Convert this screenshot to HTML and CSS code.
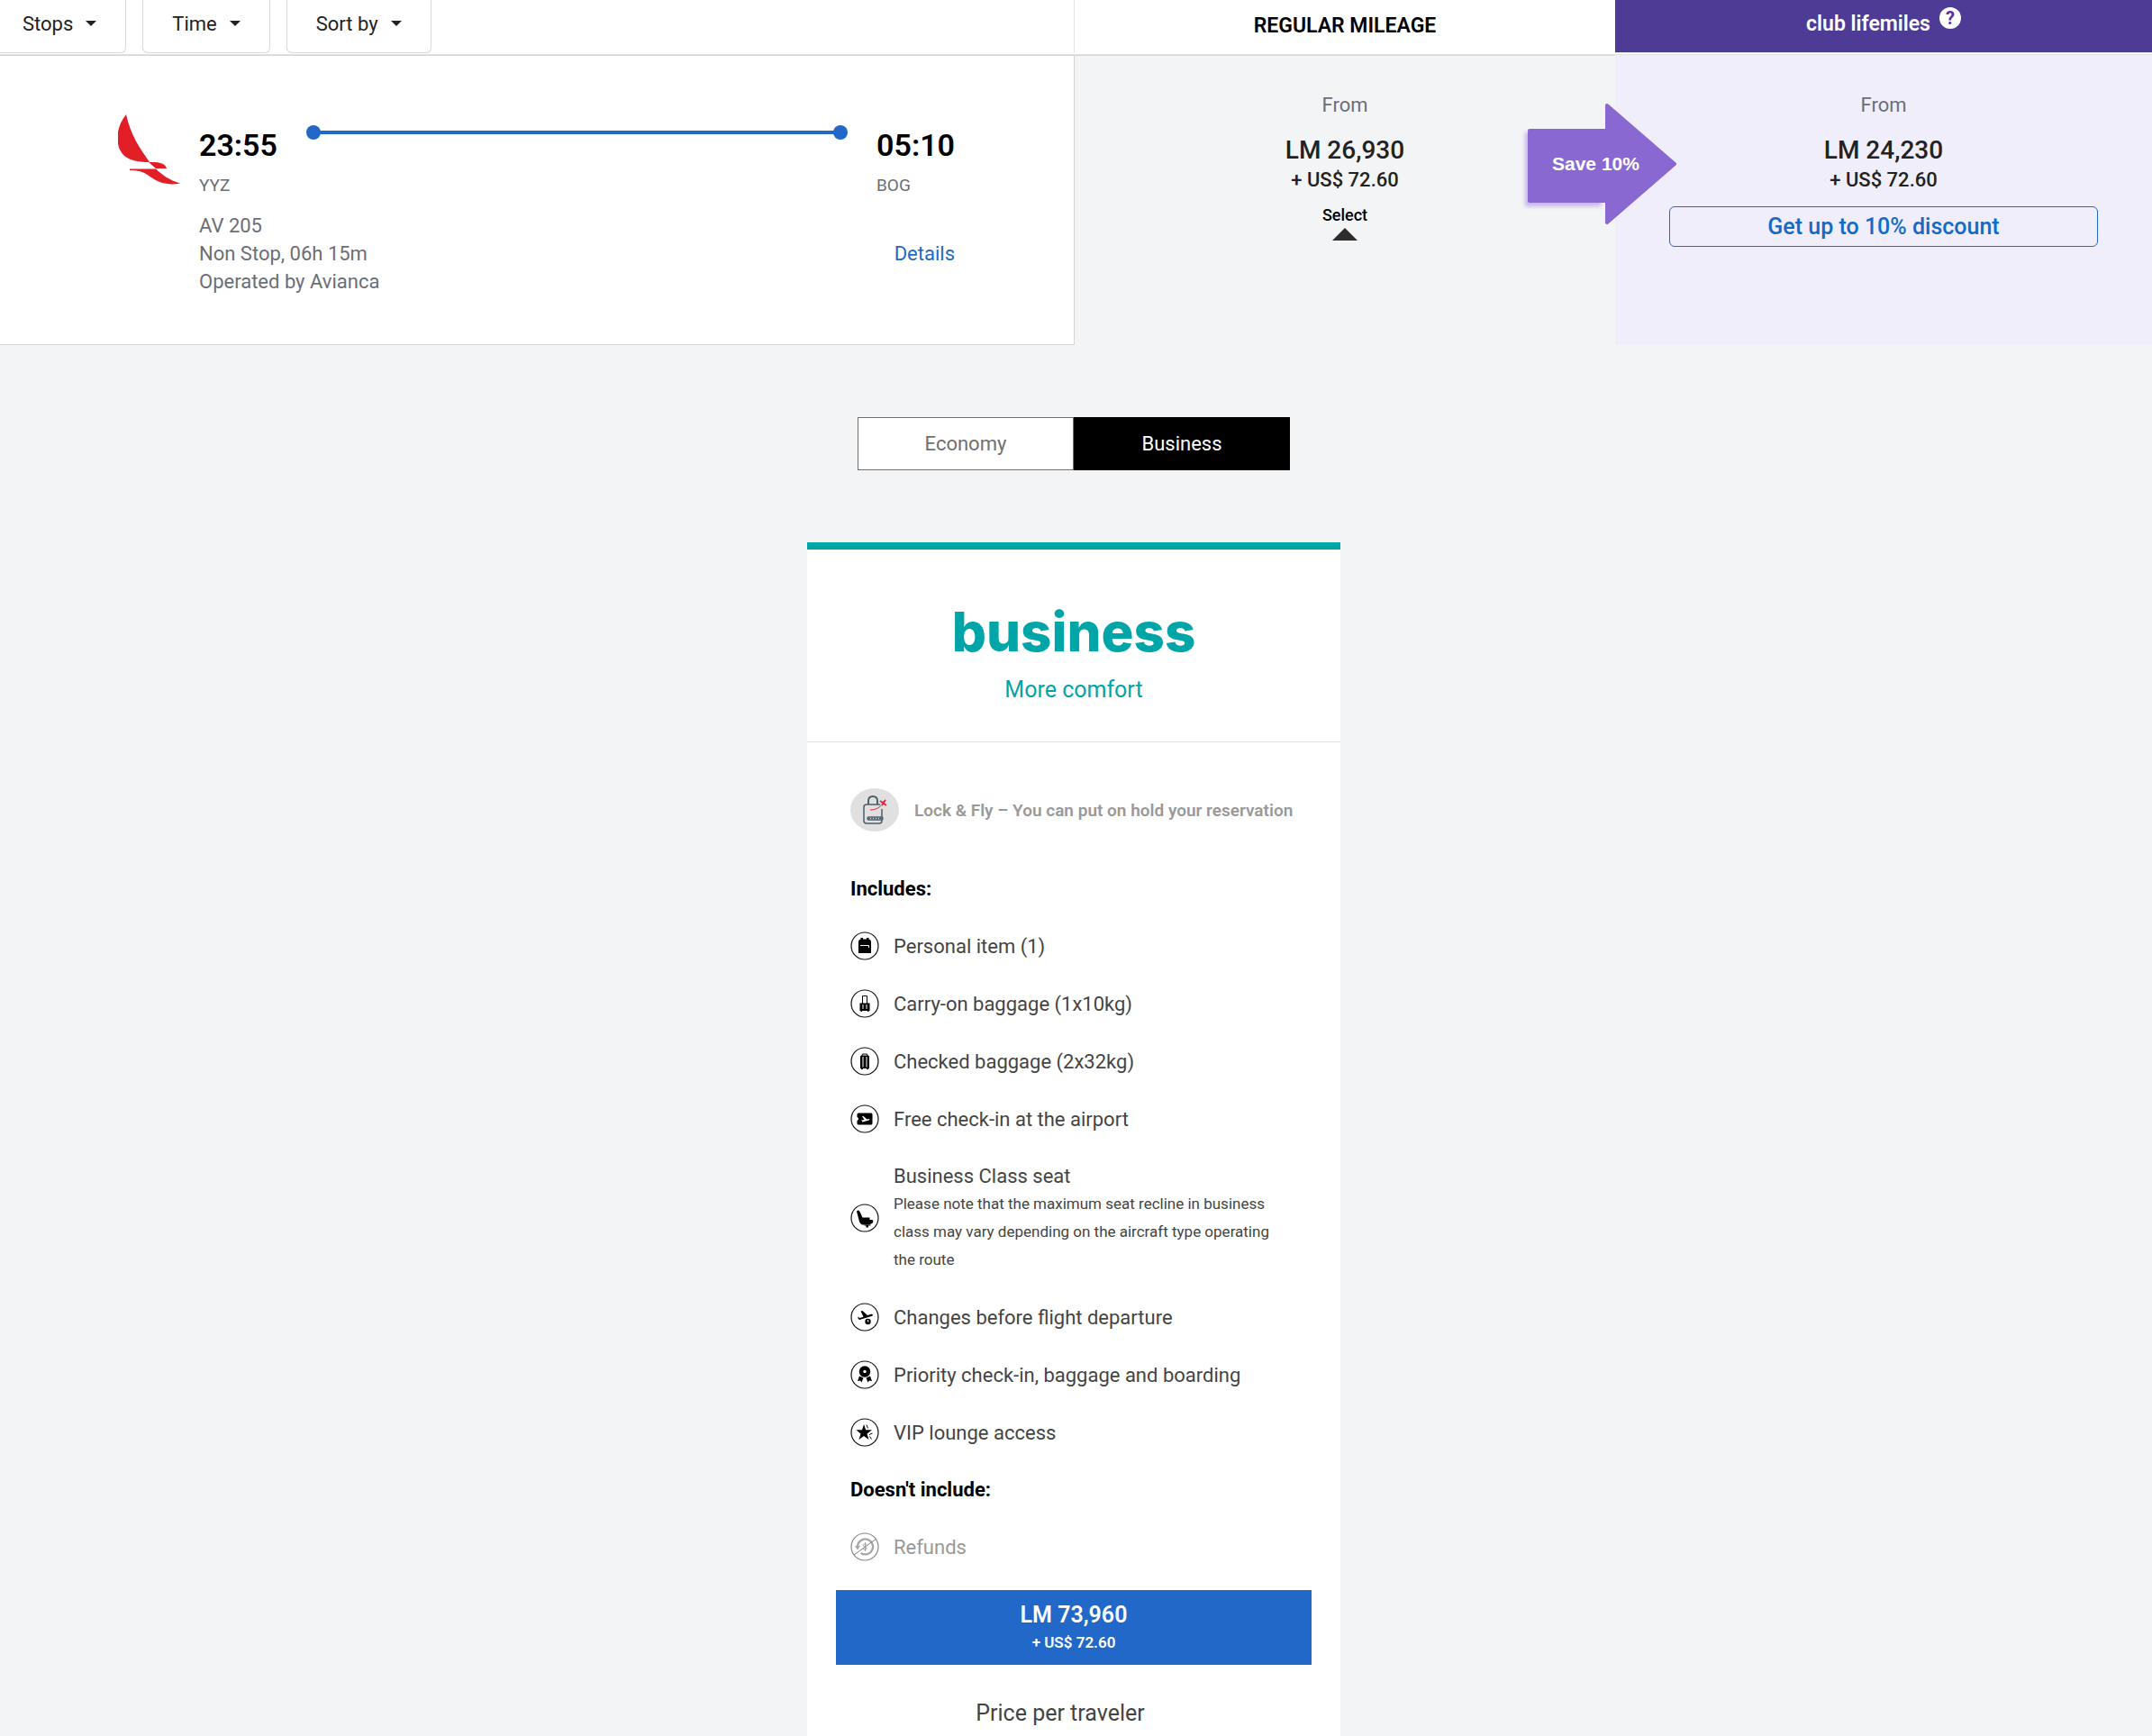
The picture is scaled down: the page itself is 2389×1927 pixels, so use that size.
FILE: index.html
```html
<!DOCTYPE html>
<html lang="en">
<head>
    <meta charset="UTF-8">
    <meta name="viewport" content="width=device-width, initial-scale=1.0">
    <title>Flights</title>
    <link rel="stylesheet" href="styles.css">
</head>
<body>
    <header class="columns top-bar">
        <div class="filters">
            <button type="button" class="filter">Stops <span class="caret"></span></button>
            <button type="button" class="filter">Time <span class="caret"></span></button>
            <button type="button" class="filter">Sort by <span class="caret"></span></button>
        </div>
        <h2 class="regular-title">REGULAR MILEAGE</h2>
        <div class="club-title">
            <h2>club lifemiles</h2>
            <button type="button" class="help" aria-label="Help">?</button>
        </div>
    </header>

    <section class="columns flight">
        <div class="flight-info">
            <svg class="airline" viewBox="0 0 69 78">
                <path fill="#e21f26" d="M9 0C-4 16-3 37 7 46c8 6 17 7 28 7C24 37 14 23 9 0z"/>
                <path fill="#e21f26" d="M34 53c10 0 18 0 20 7H42z"/>
                <path fill="#e21f26" d="M13 60.500h29C49 67 57 73 69 76.500 57 79 45 76 37 70c-8-6-13-8-24-8z"/>
            </svg>
            <div class="flight-main">
                <div class="route">
                    <div class="stop">
                        <strong class="time">23:55</strong>
                        <span class="code">YYZ</span>
                    </div>
                    <div class="track"></div>
                    <div class="stop">
                        <strong class="time">05:10</strong>
                        <span class="code">BOG</span>
                    </div>
                </div>
                <div class="flight-details">
                    <p>AV 205<br>Non Stop, 06h 15m<br>Operated by Avianca</p>
                    <a href="#">Details</a>
                </div>
            </div>
        </div>
        <div class="fare regular">
            <p class="from">From</p>
            <p class="miles">LM 26,930</p>
            <p class="taxes">+ US$ 72.60</p>
            <button type="button" class="select">Select<span class="triangle"></span></button>
        </div>
        <div class="fare club">
            <div class="save">
                <svg viewBox="0 0 176 146">
                    <path class="save-shadow" d="M7 34h84v82H7z"/>
                    <path fill="#8968d1" stroke="#8968d1" stroke-width="4" stroke-linejoin="round" d="M12 32h86V4l75 65-75 65V110H12z"/>
                </svg>
                <span>Save 10%</span>
            </div>
            <p class="from">From</p>
            <p class="miles">LM 24,230</p>
            <p class="taxes">+ US$ 72.60</p>
            <button type="button" class="discount">Get up to 10% discount</button>
        </div>
    </section>

    <main class="cabins">
        <div class="cabin-tabs">
            <button type="button">Economy</button>
            <button type="button" class="active">Business</button>
        </div>

        <article class="card">
            <div class="card-head">
                <h1>business</h1>
                <p>More comfort</p>
            </div>
            <div class="card-body">
                <div class="lock">
                    <svg viewBox="0 0 54 48">
                        <ellipse cx="27" cy="24" rx="27" ry="24" fill="#e0e0e0"/>
                        <g fill="none" stroke="#4c5f6b" stroke-width="1.500">
                            <path d="M33 18H18q-3 0-3 3v15q0 3 3 3h14q3 0 3-3V23"/>
                            <path stroke-width="2" d="M20 18v-4q0-5 5-5t5 5v4"/>
                            <rect x="19" y="32" width="17" height="3" rx="1.500"/>
                            <path stroke-dasharray="2 1" d="M20 33.500h15"/>
                        </g>
                        <path fill="none" stroke="#e8203c" stroke-width="1" d="M22 24c7 0 11-3 15-8"/>
                        <path fill="none" stroke="#e8203c" stroke-width="1.600" d="M33 14l7 5M39 13l-4 6M36 16l3-3"/>
                    </svg>
                    <span>Lock &amp; Fly – You can put on hold your reservation</span>
                </div>
                <h3>Includes:</h3>
                <ul class="perks">
                    <li>
                        <svg viewBox="0 0 32 32">
                            <circle class="ring" cx="16" cy="16" r="15"/>
                            <path d="M11.500 7h2.500v1.500h4V7h2.500v1.500q2.500.5 2.500 3V24H9V11.500q0-2.500 2.500-3z"/>
                            <path class="cut" d="M11 15.500h9.500v2.500"/>
                        </svg>
                        Personal item (1)
                    </li>
                    <li>
                        <svg viewBox="0 0 32 32">
                            <circle class="ring" cx="16" cy="16" r="15"/>
                            <path class="line" d="M13.500 16V7.500h5V16"/>
                            <path d="M10.500 15.500h11v8.500h-1v1h-1.500v-1h-6v1h-1.500v-1h-1z"/>
                            <path class="cut" d="M14 17v5M18 17v5"/>
                        </svg>
                        Carry-on baggage (1x10kg)
                    </li>
                    <li>
                        <svg viewBox="0 0 32 32">
                            <circle class="ring" cx="16" cy="16" r="15"/>
                            <path class="line" d="M12.500 11l1-3h5l1 3"/>
                            <path d="M11 11q0-1.500 1.500-1.500h7q1.500 0 1.500 1.500v13h-1v1h-2v-1h-4v1h-2v-1h-1z"/>
                            <path class="cut" d="M14 11v11.500M18 11v11.500"/>
                        </svg>
                        Checked baggage (2x32kg)
                    </li>
                    <li>
                        <svg viewBox="0 0 32 32">
                            <circle class="ring" cx="16" cy="16" r="15"/>
                            <path d="M9 9.500h14q1.500 0 1.500 1.500v10q0 1.500-1.500 1.500H9q-1.500 0-1.500-1.500v-3c2-.7 2-3.300 0-4V11q0-1.500 1.500-1.500z"/>
                            <path fill="#fff" d="M12 16.500l1.500 1 2-.5-2.500-4h1.500l4 3.500 2.500-.5q1 1-.5 1.500l-7 2z"/>
                        </svg>
                        Free check-in at the airport
                    </li>
                    <li>
                        <svg viewBox="0 0 32 32">
                            <circle class="ring" cx="16" cy="16" r="15"/>
                            <path d="M7 8.500q2-2 3.500.5l3 6.500h8v2.500h3q2 2-.5 4l-3 1.500h-8q-2-.5-3-3.500z"/>
                            <path d="M15.500 23.500h7v1h-2.500v2h-2.500v-2h-2z"/>
                        </svg>
                        <div>
                            Business Class seat
                            <small>Please note that the maximum seat recline in business class may vary depending on the aircraft type operating the route</small>
                        </div>
                    </li>
                    <li>
                        <svg viewBox="0 0 32 32">
                            <circle class="ring" cx="16" cy="16" r="15"/>
                            <path d="M8 15.500l2.500 1.500 4-1.200-3-6.300 2-.5 5.500 5 4-1.200q2-.3 2 1-.3 1-1.500 1.300L10 19q-1.500-1-2-3.500z"/>
                            <circle cx="19.500" cy="21" r="3.200"/>
                            <path class="cut" d="M19.500 19v2h1"/>
                        </svg>
                        Changes before flight departure
                    </li>
                    <li>
                        <svg viewBox="0 0 32 32">
                            <circle class="ring" cx="16" cy="16" r="15"/>
                            <circle cx="16" cy="12.500" r="6.200"/>
                            <circle cx="16" cy="12.500" r="1.700" fill="#fff"/>
                            <path d="M10 17.500l4.500 2-2 5-1.500-2-3 .5zM22 17.500l-4.500 2 2 5 1.500-2 3 .5z"/>
                        </svg>
                        Priority check-in, baggage and boarding
                    </li>
                    <li>
                        <svg viewBox="0 0 32 32">
                            <circle class="ring" cx="16" cy="16" r="15"/>
                            <path d="M15 7l2.200 6.200H24l-5.500 4.200 2 6.600-5.500-4-5.500 4 2-6.600L6.500 13.200h6.500z"/>
                            <path class="line" d="M18 7.500l1.500 4M24.500 17q-3 .5-3.500 2M21.500 20.500l2 3"/>
                        </svg>
                        VIP lounge access
                    </li>
                </ul>
                <h3>Doesn't include:</h3>
                <ul class="perks">
                    <li class="off">
                        <svg viewBox="0 0 32 32">
                            <circle class="ring" cx="16" cy="16" r="15"/>
                            <g opacity=".7">
                                <path class="line thick" d="M8 16a8.500 8.500 0 1 1 3.500 6.800"/>
                                <path d="M5 15h6l-3 4.500z"/>
                                <path class="line" d="M18.500 13.500q-2.500-1.500-4 0t1.500 2.500 2 2.500-4 0M16.500 11v10"/>
                            </g>
                            <path class="line" d="M4 25L29 7"/>
                        </svg>
                        Refunds
                    </li>
                </ul>
                <button type="button" class="buy">LM 73,960<span>+ US$ 72.60</span></button>
                <p class="per">Price per traveler</p>
            </div>
        </article>
    </main>
</body>
</html>
```
FILE: styles.css
```css
*{
    box-sizing: border-box;
}
body{
    margin: 0;
    min-height: 100vh;
    display: flex;
    flex-direction: column;
    font-family: Roboto, "Liberation Sans", sans-serif;
    font-size: 22px;
    line-height: 31px;
    color: #444;
    background: #f3f4f6;
}
h1, h2, h3, p, ul{
    margin: 0;
    padding: 0;
}
ul{
    list-style: none;
}
button{
    font: inherit;
    color: inherit;
    cursor: pointer;
}
a{
    color: #2168c8;
    text-decoration: none;
}
.columns{
    display: grid;
    grid-template-columns: 1193fr 600fr 596fr;
}

/* top bar */
.top-bar{
    height: 61px;
    background: #fff;
    border-bottom: 1px solid #e2e2e2;
}
.filters{
    display: flex;
    gap: 18px;
    height: 59px;
    margin-left: -8px;
    border-right: 1px solid #e6e6e6;
}
.filter{
    display: flex;
    align-items: center;
    gap: 14px;
    padding: 0 32px 6px;
    border: 1px solid #d9d9d9;
    border-top: 0;
    border-radius: 0 0 6px 6px;
    background: #fff;
    color: #222;
}
.caret{
    border: 6px solid transparent;
    border-top-color: #222;
    border-bottom: 0;
}
.regular-title,
.club-title h2{
    font-size: 23px;
    font-weight: 600;
}
.regular-title{
    padding-top: 13px;
    text-align: center;
    color: #000;
}
.club-title{
    display: flex;
    justify-content: center;
    gap: 10px;
    height: 59px;
    padding-top: 8px;
    border-bottom: 1px solid #e2e2e2;
    background: #4d3b96;
    color: #fff;
}
.club-title h2{
    padding-top: 3px;
}
.help{
    width: 24px;
    height: 24px;
    padding: 0;
    border: 0;
    border-radius: 50%;
    background: #fff;
    color: #5c2da0;
    font-size: 20px;
    font-weight: 700;
    line-height: 24px;
}

/* flight row */
.flight-info{
    display: flex;
    gap: 21px;
    padding: 65px 132px 54px 131px;
    border: 1px solid #d6d6d6;
    border-left: 0;
    background: #fff;
}
.airline{
    width: 69px;
    height: 78px;
}
.flight-main{
    flex: 1;
    padding-top: 12px;
}
.route{
    display: flex;
    gap: 32px;
}
.stop{
    display: flex;
    flex-direction: column;
    gap: 6px;
}
.time{
    font-size: 34px;
    font-weight: 600;
    line-height: 45px;
    color: #000;
}
.code{
    font-size: 19px;
    color: #6b6e76;
}
.track{
    flex: 1;
    display: flex;
    justify-content: space-between;
    height: 16px;
    background: linear-gradient(#2168c8, #2168c8) center / calc(100% - 16px) 4px no-repeat;
}
.track::before,
.track::after{
    content: "";
    width: 16px;
    height: 16px;
    border-radius: 50%;
    background: #2168c8;
}
.flight-details{
    display: flex;
    justify-content: space-between;
    align-items: center;
    margin-top: 14px;
    color: #6b6e76;
}
.fare{
    padding-top: 39px;
    text-align: center;
    color: #222;
}
.regular{
    border-top: 1px solid #d6d6d6;
}
.club{
    position: relative;
    padding-top: 40px;
    background: #f0eefb;
}
.from{
    color: #6b6e76;
}
.miles{
    margin-top: 18px;
    font-size: 28px;
    font-weight: 500;
    line-height: 34px;
}
.taxes{
    font-weight: 500;
}
.select{
    display: flex;
    flex-direction: column;
    align-items: center;
    margin: 12px auto 0;
    padding: 0;
    border: 0;
    background: none;
    color: #000;
    font-size: 18px;
    font-weight: 500;
    line-height: 24px;
}
.triangle{
    margin-top: 2px;
    border: 14px solid transparent;
    border-bottom-color: #2d2d2d;
    border-top: 0;
}
.discount{
    width: 80%;
    height: 45px;
    margin-top: 14px;
    border: 1px solid #2168c8;
    border-radius: 6px;
    background: none;
    color: #146ac6;
    font-size: 25px;
    font-weight: 500;
}
.save{
    position: absolute;
    top: 52px;
    left: -107px;
    width: 176px;
    height: 146px;
    color: #fff;
    font: bold 21px/31px "Liberation Sans", sans-serif;
}
.save svg{
    display: block;
    width: 100%;
}
.save span{
    position: absolute;
    top: 53px;
    left: 37px;
}
.save-shadow{
    fill: #c5b4ea;
    filter: blur(2px);
}

/* cabins */
.cabins{
    flex: 1;
    display: flex;
    flex-direction: column;
    align-items: center;
    gap: 80px;
    padding: 80px 5px 0 0;
}
.cabin-tabs{
    display: flex;
}
.cabin-tabs button{
    width: 240px;
    height: 59px;
    border: 1px solid #707070;
    background: #fff;
    color: #707070;
}
.cabin-tabs .active{
    border-color: #000;
    background: #000;
    color: #fff;
}
.card{
    flex: 1;
    width: 592px;
    border-top: 8px solid #00a5a8;
    background: #fff;
}
.card-head{
    height: 214px;
    padding-top: 55px;
    border-bottom: 1px solid #e2e2e2;
    text-align: center;
    color: #00a5a8;
}
.card-head h1{
    font-family: Inter, sans-serif;
    font-size: 60px;
    font-weight: 800;
    line-height: 72px;
}
.card-head p{
    margin-top: 13px;
    font-size: 25px;
}
.card-body{
    display: flex;
    flex-direction: column;
    gap: 32px;
    padding: 51px 32px 11px;
}
.card-body h3,
.lock,
.perks{
    padding: 0 16px;
}
.card-body h3{
    font-size: 22px;
    font-weight: 700;
    line-height: 31px;
    color: #000;
}
.lock{
    display: flex;
    align-items: center;
    gap: 17px;
    margin-bottom: 16px;
    color: #999;
    font-size: 19px;
    font-weight: 600;
    white-space: nowrap;
}
.lock svg{
    width: 54px;
    height: 48px;
}
.perks{
    display: flex;
    flex-direction: column;
    gap: 32px;
}
.perks li{
    display: flex;
    align-items: center;
    gap: 16px;
}
.perks svg{
    flex: none;
    width: 32px;
    height: 32px;
}
.perks small{
    display: block;
    padding-right: 16px;
    font-size: 17px;
}
.ring{
    fill: none;
    stroke: #111;
    stroke-width: 1.2;
}
.line{
    fill: none;
    stroke: #000;
}
.thick{
    stroke-width: 2.2;
}
.cut{
    fill: none;
    stroke: #fff;
}
.off{
    color: #999;
}
.off svg{
    opacity: .5;
}
.buy{
    height: 83px;
    padding: 2px 0 0;
    border: 0;
    background: #2168c8;
    color: #fff;
    font-size: 25px;
    font-weight: 600;
}
.buy span{
    display: block;
    font-size: 17px;
}
.per{
    margin-top: 6px;
    padding-right: 30px;
    text-align: center;
    font-size: 25px;
}
```
